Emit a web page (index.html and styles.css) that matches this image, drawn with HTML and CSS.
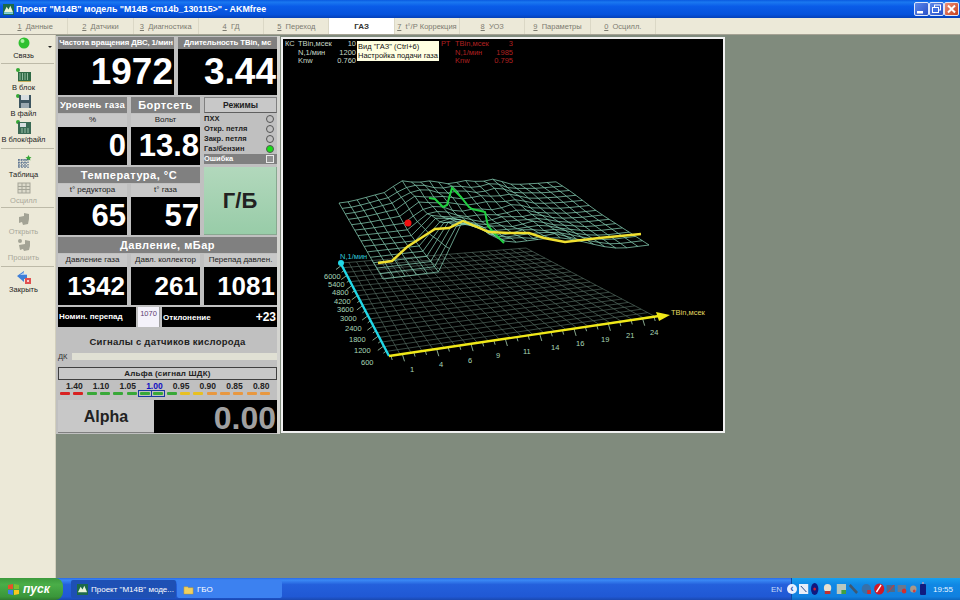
FILE: index.html
```html
<!DOCTYPE html>
<html lang="ru">
<head>
<meta charset="utf-8">
<title>AKMfree</title>
<link rel="stylesheet" href="styles.css">
</head>
<body>
<div class="window">
  <header class="titlebar">
    <svg class="app-icon" width="11" height="11" viewBox="0 0 12 12"><rect width="12" height="12" fill="#1c6a4a"/><path d="M1 9 4 3l2 3 2-4 3 7z" fill="#e8f4d8"/><rect x="1" y="9" width="10" height="2" fill="#7fd0e0"/></svg>
    <span class="title-text">Проект "М14В" модель "М14В &lt;m14b_130115&gt;" - AKMfree</span>
    <div class="win-btns">
      <span class="win-btn"><svg width="15" height="14" viewBox="0 0 15 14"><rect x="3" y="9" width="6" height="2.5" fill="#fff"/></svg></span>
      <span class="win-btn"><svg width="15" height="14" viewBox="0 0 15 14"><g fill="none" stroke="#fff"><rect x="5.5" y="3" width="6" height="5"/><rect x="3.5" y="5.5" width="6" height="5" fill="#3f6fe0"/></g></svg></span>
      <span class="win-btn close"><svg width="15" height="14" viewBox="0 0 15 14"><path d="M4 3.5l7 7M11 3.5l-7 7" stroke="#fff" stroke-width="2"/></svg></span>
    </div>
  </header>

  <nav class="tabs">
    <span class="tab"><u>1</u>&nbsp; Данные</span>
    <span class="tab"><u>2</u>&nbsp; Датчики</span>
    <span class="tab"><u>3</u>&nbsp; Диагностика</span>
    <span class="tab"><u>4</u>&nbsp; ГД</span>
    <span class="tab"><u>5</u>&nbsp; Переход</span>
    <span class="tab active">ГАЗ</span>
    <span class="tab"><u>7</u>&nbsp; t°/Р Коррекция</span>
    <span class="tab"><u>8</u>&nbsp; УОЗ</span>
    <span class="tab"><u>9</u>&nbsp; Параметры</span>
    <span class="tab"><u>0</u>&nbsp; Осцилл.</span>
  </nav>

  <div class="body-row">
    <aside class="sidebar">
      <div class="group g1">
        <div class="tool">
          <svg class="tool-icon" width="16" height="16" viewBox="0 0 16 16"><circle cx="8" cy="8" r="5.5" fill="#2fc02f"/><circle cx="6.5" cy="6" r="2" fill="#a8f0a0"/></svg>
          <span>Связь</span>
          <i class="caret"></i>
        </div>
      </div>
      <div class="group g2">
        <div class="tool">
          <svg class="tool-icon" width="18" height="16" viewBox="0 0 18 16"><circle cx="3" cy="3" r="2" fill="#35a835"/><rect x="3" y="5" width="13" height="9" fill="#2f6a45"/><path d="M5 6v7M7.500 6v7M10 6v7M12.500 6v7" stroke="#8fb89c"/><rect x="3" y="14" width="13" height="1" fill="#c8b060"/></svg>
          <span>В блок</span>
        </div>
        <div class="tool">
          <svg class="tool-icon" width="18" height="16" viewBox="0 0 18 16"><circle cx="3" cy="3" r="2" fill="#35a835"/><rect x="4" y="2" width="12" height="13" fill="#3d5560"/><rect x="6" y="2" width="8" height="5" fill="#d8dee0"/><rect x="6" y="10" width="8" height="5" fill="#9aa8b0"/></svg>
          <span>В файл</span>
        </div>
        <div class="tool">
          <svg class="tool-icon" width="18" height="16" viewBox="0 0 18 16"><circle cx="3" cy="3" r="2" fill="#35a835"/><rect x="3" y="3" width="13" height="12" fill="#3a6a55"/><rect x="5" y="4" width="6" height="4" fill="#d8dee0"/><path d="M7 9v5M10 9v5M13 9v5" stroke="#9cc0a8"/></svg>
          <span>В блок/файл</span>
        </div>
      </div>
      <div class="group g3">
        <div class="tool">
          <svg class="tool-icon" width="18" height="16" viewBox="0 0 18 16"><path d="M13.500 1l1 2 2 .3-1.500 1.300.4 2-1.900-1-1.900 1 .4-2-1.500-1.300 2-.3z" fill="#35a835"/><path d="M3 6h10M3 9h10M3 12h10M4 5v9M7 5v9M10 5v9M13 5v9" stroke="#2f4f7a" stroke-dasharray="1.500 1"/></svg>
          <span>Таблица</span>
        </div>
        <div class="tool off">
          <svg class="tool-icon" width="16" height="16" viewBox="0 0 16 16"><rect x="2" y="3" width="12" height="10" fill="#dcdacb" stroke="#a5a598"/><path d="M2 6.500h12M2 9.500h12M6 3v10M10 3v10" stroke="#a5a598"/></svg>
          <span>Осцилл</span>
        </div>
      </div>
      <div class="group g4">
        <div class="tool off">
          <svg class="tool-icon" width="16" height="16" viewBox="0 0 16 16"><path d="M3 6l5-1V2l5 1v5l-1 5-5 1-1-3-3 1z" fill="#a3a395"/></svg>
          <span>Открыть</span>
        </div>
        <div class="tool off">
          <svg class="tool-icon" width="16" height="16" viewBox="0 0 16 16"><circle cx="4" cy="4" r="2" fill="#a3a395"/><path d="M3 8l6-1V3l5 1v5l-1 4-5 1-1-2-3 1z" fill="#a3a395"/></svg>
          <span>Прошить</span>
        </div>
      </div>
      <div class="group g5">
        <div class="tool">
          <svg class="tool-icon" width="18" height="16" viewBox="0 0 18 16"><path d="M2 7l7-5v3h3v5H9v3z" fill="#3f7fd8"/><path d="M5 6l4-3v2h3v1z" fill="#a8c8f0"/><rect x="10" y="9" width="6" height="6" fill="#e05050"/><rect x="12" y="11" width="2" height="2" fill="#f8d0d0"/></svg>
          <span>Закрыть</span>
        </div>
      </div>
    </aside>

    <main class="workspace">
      <section class="panel">
        <div class="row row-top">
          <div class="tile">
            <div class="tile-h small">Частота вращения ДВС, 1/мин</div>
            <div class="tile-v v-xl">1972</div>
          </div>
          <div class="tile">
            <div class="tile-h small">Длительность TBin, мс</div>
            <div class="tile-v v-xl">3.44</div>
          </div>
        </div>

        <div class="row row-three">
          <div class="tile">
            <div class="tile-h mid">Уровень газа</div>
            <div class="tile-s">%</div>
            <div class="tile-v v-l">0</div>
          </div>
          <div class="tile">
            <div class="tile-h">Бортсеть</div>
            <div class="tile-s">Вольт</div>
            <div class="tile-v v-l">13.8</div>
          </div>
          <div class="modes">
            <div class="modes-h">Режимы</div>
            <div class="mode"><span>ПХХ</span><i class="lamp"></i></div>
            <div class="mode"><span>Откр. петля</span><i class="lamp"></i></div>
            <div class="mode"><span>Закр. петля</span><i class="lamp"></i></div>
            <div class="mode"><span>Газ/бензин</span><i class="lamp on"></i></div>
            <div class="mode err"><span>Ошибка</span><i class="square"></i></div>
          </div>
        </div>

        <div class="row row-temp">
          <div class="temp">
            <div class="tile-h">Температура, °С</div>
            <div class="pair">
              <div class="tile">
                <div class="tile-s">t° редуктора</div>
                <div class="tile-v v-l">65</div>
              </div>
              <div class="tile">
                <div class="tile-s">t° газа</div>
                <div class="tile-v v-l">57</div>
              </div>
            </div>
          </div>
          <div class="gb">Г/Б</div>
        </div>

        <div class="pressure">
          <div class="tile-h">Давление, мБар</div>
          <div class="row-three triple">
            <div class="tile">
              <div class="tile-s">Давление газа</div>
              <div class="tile-v v-m">1342</div>
            </div>
            <div class="tile">
              <div class="tile-s">Давл. коллектор</div>
              <div class="tile-v v-m">261</div>
            </div>
            <div class="tile">
              <div class="tile-s">Перепад давлен.</div>
              <div class="tile-v v-m">1081</div>
            </div>
          </div>
        </div>

        <div class="row row-nom">
          <div class="nom">Номин. перепад</div>
          <div class="nom-input">1070</div>
          <div class="dev"><span>Отклонение</span><b>+23</b></div>
        </div>

        <div class="signals">
          <div class="signals-title">Сигналы с датчиков кислорода</div>
          <div class="dk"><span>ДК</span><div class="dk-bar"></div></div>
        </div>

        <div class="alpha-h">Альфа (сигнал ШДК)</div>
        <div class="scale">
          <div class="scale-nums">
            <span>1.40</span><span>1.10</span><span>1.05</span><span class="cur">1.00</span><span>0.95</span><span>0.90</span><span>0.85</span><span>0.80</span>
          </div>
          <div class="leds">
            <i class="led red"></i><i class="led red"></i>
            <i class="led green"></i><i class="led green"></i><i class="led green"></i><i class="led green"></i>
            <i class="led green box-l"></i><i class="led green box-r"></i>
            <i class="led green"></i>
            <i class="led yellow"></i><i class="led yellow"></i>
            <i class="led orange"></i><i class="led orange"></i><i class="led orange"></i><i class="led orange"></i><i class="led orange"></i>
          </div>
        </div>
        <div class="alpha-row">
          <div class="alpha-label">Alpha</div>
          <div class="alpha-value">0.00</div>
        </div>
      </section>

      <section class="plot">
        <svg class="chart" width="440" height="392" viewBox="284 39 440 392">
          <g class="legend">
            <text x="286" y="46">КС</text>
            <text x="299" y="46">TBin,мсек</text>
            <text x="299" y="55">N,1/мин</text>
            <text x="299" y="63">Knw</text>
            <text x="357" y="46" text-anchor="end">10</text>
            <text x="357" y="55" text-anchor="end">1200</text>
            <text x="357" y="63" text-anchor="end">0.760</text>
          </g>
          <g class="legend red-l">
            <text x="442" y="46">РТ</text>
            <text x="456" y="46">TBin,мсек</text>
            <text x="456" y="55">N,1/мин</text>
            <text x="456" y="63">Knw</text>
            <text x="514" y="46" text-anchor="end">3</text>
            <text x="514" y="55" text-anchor="end">1985</text>
            <text x="514" y="63" text-anchor="end">0.795</text>
          </g>

          <path id="floor" class="floor"/>
          <path id="mesh" class="mesh"/>
          <path id="ticks" class="ticks"/>

          <polyline class="line-green" points="505,243 497,235 489,226 486,212 482,211 473,209 470,207 462,197 453,188 448,205 444,207 436,199 430,198"/>
          <polyline class="line-yellow" points="379,263 393,261 408,247 436,229 450,228 464,221 490,232 510,233 530,233 545,238 566,242 600,238 642,234"/>
          <circle class="dot" cx="409" cy="223" r="3.500"/>

          <line class="axis-cyan" x1="390" y1="356" x2="342" y2="264"/>
          <circle class="axis-cyan-end" cx="342" cy="263" r="3"/>
          <line class="axis-yellow" x1="390" y1="356" x2="660" y2="316"/>
          <polygon class="axis-yellow-end" points="657,312 671,315 660,321"/>

          <g class="labels">
            <text class="cyan-l" x="341" y="259">N,1/мин</text>
            <text x="325" y="279">6000</text><text x="329" y="287">5400</text>
            <text x="333" y="295">4800</text><text x="335" y="304">4200</text>
            <text x="338" y="312">3600</text><text x="341" y="321">3000</text>
            <text x="346" y="331">2400</text><text x="350" y="342">1800</text>
            <text x="355" y="353">1200</text><text x="362" y="365">600</text>
            <text x="411" y="372">1</text><text x="440" y="367">4</text>
            <text x="469" y="363">6</text><text x="497" y="358">9</text>
            <text x="524" y="354">11</text><text x="552" y="350">14</text>
            <text x="577" y="346">16</text><text x="602" y="342">19</text>
            <text x="627" y="338">21</text><text x="651" y="335">24</text>
            <text class="yellow-l" x="672" y="315">TBin,мсек</text>
          </g>
        </svg>
        <div class="tooltip">Вид "ГАЗ" (Ctrl+6)<br>Настройка подачи газа</div>
      </section>
    </main>
  </div>

  <footer class="taskbar">
    <div class="start">
      <svg width="13" height="13" viewBox="0 0 13 13"><path d="M1 2l5-1v5H1z" fill="#e8502a"/><path d="M7 1l5 1v4H7z" fill="#7cc030"/><path d="M1 7h5v5l-5-1z" fill="#3a80e8"/><path d="M7 7h5v4l-5 1z" fill="#f8c820"/></svg>
      <span>пуск</span>
    </div>
    <div class="task active">
      <svg width="11" height="11" viewBox="0 0 12 12"><rect width="12" height="12" fill="#1c6a4a"/><path d="M1 9 4 3l2 3 2-4 3 7z" fill="#e8f4d8"/></svg>
      <span>Проект "М14В" моде...</span>
    </div>
    <div class="task">
      <svg width="11" height="11" viewBox="0 0 12 12"><path d="M1 3h4l1 1h5v7H1z" fill="#f0d060" stroke="#b09030" stroke-width=".5"/></svg>
      <span>ГБО</span>
    </div>
    <div class="lang">EN</div>
    <div class="tray">
      <i class="tray-arrow">‹</i>
      <svg width="118" height="14" viewBox="0 0 128 14" preserveAspectRatio="none">
        <rect x="0" y="2" width="10" height="10" fill="#e8eef8"/><path d="M2 4l6 6" stroke="#204080"/>
        <ellipse cx="17" cy="7" rx="4" ry="6" fill="#101880"/><circle cx="17" cy="7" r="1.500" fill="#d02030"/>
        <circle cx="31" cy="6" r="4" fill="#e8e0d0"/><rect x="28" y="9" width="6" height="3" fill="#c03030"/>
        <rect x="41" y="2" width="10" height="10" fill="#b8c8c0"/><rect x="46" y="8" width="5" height="4" fill="#40a040"/>
        <path d="M56 2l8 8-2 2-8-8z" fill="#405870"/>
        <circle cx="73" cy="7" r="5" fill="#3870a8"/><rect x="74" y="8" width="4" height="4" fill="#d03030"/>
        <circle cx="87" cy="7" r="5.500" fill="#d01828"/><path d="M84 10l5-7" stroke="#fff" stroke-width="1.500"/>
        <rect x="95" y="3" width="9" height="7" fill="#506888"/><path d="M96 11l7-8" stroke="#e03030"/>
        <rect x="107" y="3" width="9" height="7" fill="#687890"/><circle cx="114" cy="9" r="2.500" fill="#d03030"/>
        <circle cx="124" cy="7" r="3.500" fill="#a89888"/><circle cx="125" cy="9" r="1.500" fill="#d04040"/>
      </svg>
      <svg width="8" height="14" viewBox="0 0 8 14"><rect x="1" y="2" width="6" height="11" rx="1" fill="#101c80"/><rect x="3" y="0" width="2" height="2" fill="#8898c8"/></svg>
      <span class="clock">19:55</span>
    </div>
  </footer>
</div>
<script src="script.js"></script>
</body>
</html>
```
FILE: styles.css
```css
* { box-sizing: border-box; }
html, body { margin: 0; height: 100%; overflow: hidden; }
body { font-family: "Liberation Sans", Arial, sans-serif; background: #808b7d; }
.window { width: 960px; height: 600px; display: flex; flex-direction: column; }

/* Title bar */
.titlebar {
  height: 18px; display: flex; align-items: center; padding: 0 1px 0 3px; gap: 2px;
  background: linear-gradient(#0a5ae0 0, #1a78f0 12%, #0a5ce8 35%, #0552dc 80%, #0440b8 100%);
}
.title-text { color: #fff; font: bold 8.9px "Liberation Sans", Arial, sans-serif; }
.win-btns { margin-left: auto; display: flex; gap: 0; }
.win-btn {
  width: 15px; height: 14px; border: 1px solid #dfe8fa; border-radius: 2px; display: flex;
  background: linear-gradient(135deg, #5c88ea, #2850c8);
}
.win-btn svg { margin: -1px; flex: none; }
.win-btn.close { background: linear-gradient(135deg, #ec9078, #c8401c); }

/* Tabs */
.tabs {
  height: 17px; display: flex; align-items: stretch; padding-left: 3px; background: #ece9d8;
  border-bottom: 1px solid #a5a294;
}
.tab {
  width: 65.3px; display: flex; align-items: center; justify-content: center;
  font-size: 7.5px; color: #7c7b70; border-right: 1px solid #dbd8c6; white-space: nowrap;
}
.tab.active { background: #fff; color: #333; font-weight: bold; font-size: 8px; }

.body-row { flex: 1; display: flex; min-height: 0; }

/* Sidebar */
.sidebar { width: 56px; background: #ece9d8; display: flex; flex-direction: column; border-right: 1px solid #d2cfbd; }
.group { display: flex; flex-direction: column; justify-content: center; border-bottom: 1px solid #bdbaa8; margin: 0 1px; padding-right: 8px; }
.group.g1 { height: 29px; justify-content: flex-start; }
.group.g2 { height: 85px; }
.group.g3 { height: 59px; padding-top: 3px; }
.group.g4 { height: 59px; }
.group.g5 { height: 52px; border-bottom: 0; padding-top: 2px; justify-content: flex-start; }
.tool { position: relative; height: 26px; display: flex; flex-direction: column; align-items: center; font-size: 7.5px; line-height: 10px; color: #222; white-space: nowrap; }
.tool-icon { display: block; flex: none; }
.tool.off { color: #a9a89a; }
.caret { position: absolute; right: -6px; top: 11px; border: 2px solid transparent; border-top: 2px solid #222; }

/* Workspace */
.workspace { flex: 1; display: flex; align-items: flex-start; padding-top: 1px; }

/* Panel */
.panel { width: 224px; height: 398px; background: #c0c0c0; padding: 1px 0 0 2px; display: flex; flex-direction: column; border-right: 3px solid #d4d4d0; }
.row { display: grid; column-gap: 4px; }
.row-top { grid-template-columns: 116px 99px; column-gap: 4px; height: 56px; margin-bottom: 4px; }
.row-three { display: grid; grid-template-columns: 69px 69px 73px; column-gap: 4px; }
.row.row-three { height: 66px; margin-bottom: 4px; }
.row-temp { grid-template-columns: 142px 73px; height: 66px; margin-bottom: 4px; }
.tile { display: flex; flex-direction: column; min-width: 0; height: 100%; }
.tile-h {
  height: 16px; flex: none; background: #808080; color: #fff; text-align: center;
  font: bold 11px/16px "Liberation Sans", Arial, sans-serif; letter-spacing: .5px; white-space: nowrap;
}
.tile-h.small { height: 12px; font-size: 7.8px; line-height: 12px; letter-spacing: -.1px; }
.tile-h.mid { font-size: 9.5px; letter-spacing: .3px; }
.tile-s {
  height: 13px; flex: none; background: #c8c8c8; color: #222; text-align: center;
  font-size: 8px; line-height: 12px; white-space: nowrap; margin-top: 1px;
}
.tile-v { flex: 1; background: #000; color: #fff; text-align: right; font-weight: bold; padding-right: 1px; white-space: nowrap; }
.v-xl { font-size: 37px; line-height: 46px; }
.v-l { font-size: 31px; line-height: 38px; }
.v-m { font-size: 26px; line-height: 38px; padding-right: 2px; }

/* Modes */
.modes { display: flex; flex-direction: column; }
.modes-h {
  height: 16px; margin-bottom: 1px; background: #c8c8c8; border: 1px solid #808080; border-bottom-color: #606060;
  text-align: center; font: bold 8.5px/14px "Liberation Sans", Arial, sans-serif; color: #222;
}
.mode { height: 10px; display: flex; align-items: center; justify-content: space-between; font: bold 7.5px/10px "Liberation Sans", Arial, sans-serif; color: #222; padding-right: 3px; white-space: nowrap; }
.mode.err { background: #808080; color: #fff; }
.lamp { width: 8px; height: 8px; border-radius: 50%; border: 1px solid #555; background: #c0c0c0; }
.lamp.on { background: #18e018; }
.square { width: 8px; height: 8px; border: 1px solid #e8e8e8; background: #909090; }

.temp { display: flex; flex-direction: column; }
.pair { flex: 1; display: grid; grid-template-columns: 69px 69px; column-gap: 4px; min-height: 0; }
.gb {
  background: linear-gradient(#b2d8bc, #98cca8); color: #222; display: flex; align-items: center; justify-content: center;
  font-size: 22px; font-weight: bold; border-right: 1px solid #88a890; border-bottom: 1px solid #88a890;
}

.pressure { height: 66px; display: flex; flex-direction: column; margin-bottom: 4px; }
.triple { flex: 1; min-height: 0; }

/* Nominal row */
.row-nom { grid-template-columns: 78px 26px 115px; column-gap: 0; height: 20px; }
.nom { background: #000; color: #fff; font: bold 8px/20px "Liberation Sans", Arial, sans-serif; white-space: nowrap; padding-left: 1px; }
.nom-input { background: #f4f2fa; border: solid #a0a0a0; border-width: 0 1px 0 0; margin: 0 2px; color: #604070; font-size: 7.5px; line-height: 14px; text-align: center; }
.dev { background: #000; color: #fff; display: flex; justify-content: space-between; align-items: center; font-size: 8px; font-weight: bold; padding: 0 1px; }
.dev b { font-size: 12px; }

.signals { height: 40px; padding-top: 8px; }
.signals-title { font: bold 9.5px/14px "Liberation Sans", Arial, sans-serif; letter-spacing: .25px; text-align: center; color: #222; }
.dk { display: flex; align-items: center; gap: 5px; margin-top: 3px; font-size: 7.5px; color: #333; height: 9px; }
.dk-bar { flex: 1; height: 7px; background: #e0e0d4; }

.alpha-h { height: 13px; border: 1px solid #404040; background: #c8c8c8; text-align: center; font: bold 8px/11px "Liberation Sans", Arial, sans-serif; letter-spacing: .2px; color: #222; }
.scale { height: 20px; padding-top: 2px; }
.scale-nums { display: flex; padding-left: 3px; }
.scale-nums span { width: 26.7px; text-align: center; font: bold 8.5px/9px "Liberation Sans", sans-serif; color: #222; }
.scale-nums .cur { color: #1010c0; }
.leds { display: flex; padding-left: 2px; margin-top: 1px; }
.led { width: 10px; height: 3px; margin-right: 3.330px; border-radius: 1px; position: relative; }
.led.red { background: #d82020; }
.led.green { background: #38a838; }
.led.yellow { background: #e8c020; }
.led.orange { background: #e89840; }
.box-l::after, .box-r::after { content: ""; position: absolute; left: -2px; right: -2px; top: -2px; bottom: -2px; border: 1px solid #1838a0; }

.alpha-row { height: 33px; display: flex; }
.alpha-label { width: 96px; background: #c8c8c8; text-align: center; font: bold 16px/33px "Liberation Sans", Arial, sans-serif; color: #222; border-bottom: 1px solid #808080; }
.alpha-value { flex: 1; background: #000; color: #a0a0a0; text-align: right; font: bold 32px/36px "Liberation Sans", Arial, sans-serif; padding-right: 1px; }

/* Plot */
.plot { position: relative; width: 444px; height: 396px; margin-top: 1px; margin-left: 1px; background: #000; border: 2px solid #f0f0f0; }
.chart { display: block; }
.legend text { fill: #c8d8c8; font: 7.5px "Liberation Sans", Arial, sans-serif; }
.legend.red-l text { fill: #b02020; }
.floor { fill: none; stroke: #5f7a6e; stroke-width: .6; }
.mesh { fill: none; stroke: #8fdcc0; stroke-width: .7; }
.ticks { fill: none; stroke: #a8d0b0; stroke-width: .8; }
.line-green { fill: none; stroke: #20d040; stroke-width: 2; }
.line-yellow { fill: none; stroke: #f0e030; stroke-width: 2.4; }
.dot { fill: #f01010; }
.axis-cyan { stroke: #20d8e8; stroke-width: 2.400; }
.axis-cyan-end { fill: #20d8e8; }
.axis-yellow { stroke: #f0e818; stroke-width: 2.400; }
.axis-yellow-end { fill: #f0e818; }
.labels text { fill: #a8d8b8; font: 7.5px "Liberation Sans", Arial, sans-serif; }
.labels .cyan-l { fill: #30c8d8; }
.labels .yellow-l { fill: #e0d860; }
.tooltip {
  position: absolute; left: 74px; top: 2px; width: 82px; height: 20px; background: #ffffe1;
  color: #111; font-size: 7.5px; line-height: 9px; padding: 1px 0 0 1px; white-space: nowrap;
}

/* Taskbar */
.taskbar {
  height: 22px; flex: none; display: flex; align-items: center; color: #fff;
  background: linear-gradient(#2a6ae8 0, #3a88f4 10%, #2460dc 30%, #2058d4 85%, #1a48b0 100%);
}
.start {
  width: 63px; height: 22px; display: flex; align-items: center; gap: 3px; padding-left: 7px;
  background: linear-gradient(#3c9a3c, #4aae48 30%, #3a963a 85%, #2f7a2f);
  border-radius: 0 8px 8px 0; font: italic bold 12px "Liberation Sans", Arial, sans-serif;
}
.task {
  width: 105px; height: 18px; display: flex; align-items: center; gap: 3px; padding-left: 6px;
  background: #3c81f0; font-size: 8px; border-radius: 2px; white-space: nowrap; margin-right: 1px;
}
.task.active { background: #1e50b4; margin-left: 8px; }
.lang { margin-left: auto; width: 20px; font-size: 8px; color: #c8dcf8; }
.tray {
  width: 169px; height: 22px; display: flex; align-items: center; gap: 2px;
  background: linear-gradient(#18a0f0, #1088e4 30%, #1080e0 85%, #0c68c0);
  border-left: 1px solid #0c4aa0;
}
.tray-arrow { width: 10px; height: 10px; margin-left: -5px; border-radius: 50%; background: #e8f0ff; color: #2050b0; font: bold 10px/9px "Liberation Sans", Arial, sans-serif; text-align: center; flex: none; }
.clock { font-size: 8px; margin-left: 4px; color: #e8f4ff; }
```
FILE: script.js
```js
// Draws the floor grid, the fuel-map surface and the axis ticks of the 3D chart.
function lerp(a, b, t) { return [a[0] + (b[0] - a[0]) * t, a[1] + (b[1] - a[1]) * t]; }
function quad(fl, fr, br, bl, u, v) { return lerp(lerp(fl, fr, u), lerp(bl, br, u), v); }
function step(x) { x = Math.max(0, Math.min(1, x)); return x * x * (3 - 2 * x); }
function seg(p) { return p[0].toFixed(1) + ' ' + p[1].toFixed(1); }

function grid(pointAt, cols, rows) {
  var d = '';
  for (var r = 0; r <= rows; r++) {
    for (var c = 0; c <= cols; c++) {
      d += (c ? 'L' : 'M') + seg(pointAt(c / cols, r / rows));
    }
  }
  for (var c2 = 0; c2 <= cols; c2++) {
    for (var r2 = 0; r2 <= rows; r2++) {
      d += (r2 ? 'L' : 'M') + seg(pointAt(c2 / cols, r2 / rows));
    }
  }
  return d;
}

function height(u, v) {
  var rise = step((u - 0.21) / 0.08);
  var fall = 1 - 0.55 * step((u - 0.33) / 0.16);
  var edge = 1 - step((u - 0.62) / 0.3);
  var depth = 0.18 + 0.82 * (1 - v) * (1 - v);
  var main = 44 * rise * fall * edge * depth;
  var back = 8 * step((v - 0.5) / 0.4) * step(u / 0.28) * (1 - 0.6 * step((u - 0.5) / 0.3));
  var ripple = 1.6 * Math.sin(u * 40) * Math.sin(v * 23) * rise * edge;
  var ridge = 4 * Math.exp(-Math.pow((u - 0.7) / 0.05, 2)) * v;
  return main + back + ripple + ridge;
}

document.getElementById('floor').setAttribute('d', grid(function (u, v) {
  return quad([390, 356], [655, 316], [527, 248], [342, 263], u, v);
}, 24, 20));

document.getElementById('mesh').setAttribute('d', grid(function (u, v) {
  var p = quad([384, 279], [650, 245], [557, 185], [340, 203], u, v);
  return [p[0], p[1] - height(u, v)];
}, 24, 14));

var ticks = '';
for (var i = 0; i <= 23; i++) {
  var a = lerp([392, 356], [655, 317], i / 23);
  var len = i % 3 === 1 ? 7 : 4;
  ticks += 'M' + seg(a) + 'L' + seg([a[0] + len * 0.3, a[1] + len]);
}
for (var j = 1; j <= 18; j++) {
  var b = lerp([390, 356], [343, 265], j / 18);
  var l = j % 2 ? 3 : 6;
  ticks += 'M' + seg(b) + 'L' + seg([b[0] - l, b[1] + l * 0.75]);
}
document.getElementById('ticks').setAttribute('d', ticks);
```
